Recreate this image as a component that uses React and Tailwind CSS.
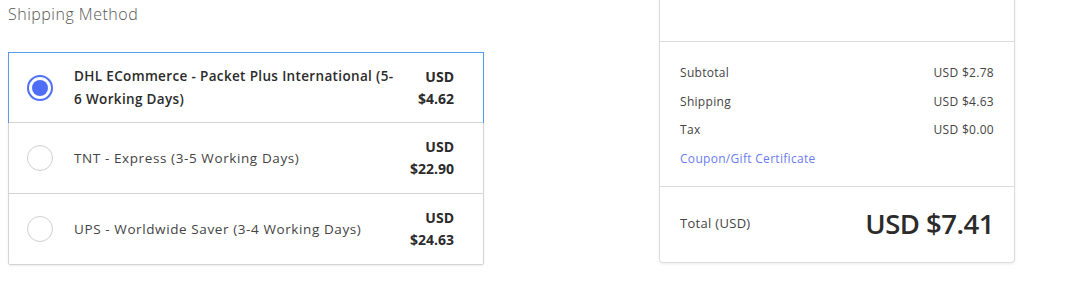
import React from "react"

const options = [
  {
    id: "dhl",
    name: (
      <>
        DHL ECommerce - Packet Plus International (5-
        <wbr />6 Working Days)
      </>
    ),
    price: "$4.62",
  },
  { id: "tnt", name: "TNT - Express (3-5 Working Days)", price: "$22.90" },
  { id: "ups", name: "UPS - Worldwide Saver (3-4 Working Days)", price: "$24.63" },
]

const Radio = ({ checked }) =>
  checked ? (
    <span className="flex h-[26px] w-[26px] shrink-0 items-center justify-center rounded-full border-2 border-[#4f6ef7] bg-white">
      <span className="h-[16px] w-[16px] rounded-full bg-[#4f6ef7]" />
    </span>
  ) : (
    <span className="h-[26px] w-[26px] shrink-0 rounded-full border border-[#cfcfcf] bg-white" />
  )

export default function App() {
  const selected = "dhl"
  return (
    <div className="flex h-[299px] w-[1065px] bg-white font-['Open_Sans',sans-serif] text-[#333]">
      <div className="w-[484px] shrink-0 pl-[8px]">
        <h2 className="mt-[4px] text-[16px] font-light leading-[20px] tracking-[0.5px] text-[#555]">
          Shipping Method
        </h2>
        <div className="mt-[28px] w-[476px] rounded-[2px] border border-[#d4d4d4] shadow-[0_1px_2px_rgba(0,0,0,0.08)]">
          {options.map((o, i) => {
            const on = o.id === selected
            return (
              <div
                key={o.id}
                className={
                  (on ? "-m-px border border-[#5a9be8] " : i > 0 ? "border-t border-[#d4d4d4] " : "") +
                  "flex h-[71px] items-center pl-[18px] pr-[29px]"
                }
              >
                <Radio checked={on} />
                <div
                  className={
                    (on
                      ? "font-semibold tracking-[0.35px] text-[#2b2b2b] "
                      : "tracking-[0.6px] text-[#444] ") +
                    "ml-[21px] flex-1 pr-[20px] text-[13.5px] leading-[23px]"
                  }
                >
                  {o.name}
                </div>
                <div className="text-right text-[14px] font-bold leading-[22px] text-[#2b2b2b]">
                  <div>USD</div>
                  <div>{o.price}</div>
                </div>
              </div>
            )
          })}
        </div>
      </div>

      <div className="ml-[175px] w-[356px] shrink-0">
        <div className="-mt-[3px] rounded-b-[4px] border border-t-0 border-[#dcdcdc] shadow-[0_1px_3px_rgba(0,0,0,0.08)]">
          <div className="h-[45px] border-b border-[#dcdcdc]" />
          <div className="flex flex-col gap-[9.5px] border-b border-[#dcdcdc] px-[20px] pt-[21px] pb-[18px] text-[12px] leading-[19px] tracking-[0.3px] text-[#444]">
            <div className="flex justify-between">
              <span>Subtotal</span>
              <span>USD $2.78</span>
            </div>
            <div className="flex justify-between">
              <span>Shipping</span>
              <span>USD $4.63</span>
            </div>
            <div className="flex justify-between">
              <span>Tax</span>
              <span>USD $0.00</span>
            </div>
            <div className="text-[#6b7cf2]">Coupon/Gift Certificate</div>
          </div>
          <div className="flex h-[75px] items-center justify-between px-[20px]">
            <span className="text-[13px] tracking-[0.3px] text-[#444]">Total (USD)</span>
            <span className="text-[27.5px] font-semibold tracking-[-0.5px] text-[#2b2b2b]">USD $7.41</span>
          </div>
        </div>
      </div>
    </div>
  )
}
